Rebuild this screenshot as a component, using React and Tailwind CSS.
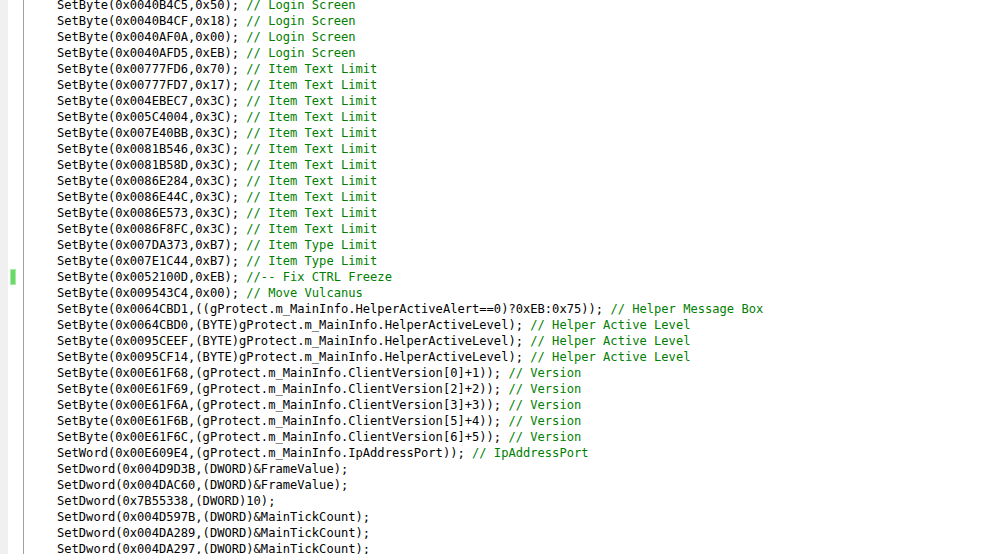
import React from 'react';

// code lines; comment part is drawn green
const lines = [
  ['SetByte(0x0040B4C5,0x50); ', '// Login Screen'],
  ['SetByte(0x0040B4CF,0x18); ', '// Login Screen'],
  ['SetByte(0x0040AF0A,0x00); ', '// Login Screen'],
  ['SetByte(0x0040AFD5,0xEB); ', '// Login Screen'],
  ['SetByte(0x00777FD6,0x70); ', '// Item Text Limit'],
  ['SetByte(0x00777FD7,0x17); ', '// Item Text Limit'],
  ['SetByte(0x004EBEC7,0x3C); ', '// Item Text Limit'],
  ['SetByte(0x005C4004,0x3C); ', '// Item Text Limit'],
  ['SetByte(0x007E40BB,0x3C); ', '// Item Text Limit'],
  ['SetByte(0x0081B546,0x3C); ', '// Item Text Limit'],
  ['SetByte(0x0081B58D,0x3C); ', '// Item Text Limit'],
  ['SetByte(0x0086E284,0x3C); ', '// Item Text Limit'],
  ['SetByte(0x0086E44C,0x3C); ', '// Item Text Limit'],
  ['SetByte(0x0086E573,0x3C); ', '// Item Text Limit'],
  ['SetByte(0x0086F8FC,0x3C); ', '// Item Text Limit'],
  ['SetByte(0x007DA373,0xB7); ', '// Item Type Limit'],
  ['SetByte(0x007E1C44,0xB7); ', '// Item Type Limit'],
  ['SetByte(0x0052100D,0xEB); ', '//-- Fix CTRL Freeze', true],
  ['SetByte(0x009543C4,0x00); ', '// Move Vulcanus'],
  ['SetByte(0x0064CBD1,((gProtect.m_MainInfo.HelperActiveAlert==0)?0xEB:0x75)); ', '// Helper Message Box'],
  ['SetByte(0x0064CBD0,(BYTE)gProtect.m_MainInfo.HelperActiveLevel); ', '// Helper Active Level'],
  ['SetByte(0x0095CEEF,(BYTE)gProtect.m_MainInfo.HelperActiveLevel); ', '// Helper Active Level'],
  ['SetByte(0x0095CF14,(BYTE)gProtect.m_MainInfo.HelperActiveLevel); ', '// Helper Active Level'],
  ['SetByte(0x00E61F68,(gProtect.m_MainInfo.ClientVersion[0]+1)); ', '// Version'],
  ['SetByte(0x00E61F69,(gProtect.m_MainInfo.ClientVersion[2]+2)); ', '// Version'],
  ['SetByte(0x00E61F6A,(gProtect.m_MainInfo.ClientVersion[3]+3)); ', '// Version'],
  ['SetByte(0x00E61F6B,(gProtect.m_MainInfo.ClientVersion[5]+4)); ', '// Version'],
  ['SetByte(0x00E61F6C,(gProtect.m_MainInfo.ClientVersion[6]+5)); ', '// Version'],
  ['SetWord(0x00E609E4,(gProtect.m_MainInfo.IpAddressPort)); ', '// IpAddressPort'],
  ['SetDword(0x004D9D3B,(DWORD)&FrameValue);', ''],
  ['SetDword(0x004DAC60,(DWORD)&FrameValue);', ''],
  ['SetDword(0x7B55338,(DWORD)10);', ''],
  ['SetDword(0x004D597B,(DWORD)&MainTickCount);', ''],
  ['SetDword(0x004DA289,(DWORD)&MainTickCount);', ''],
  ['SetDword(0x004DA297,(DWORD)&MainTickCount);', ''],
];

const Row = ({ code, comment, changed }) => (
  <div className="flex h-4">
    <div className="w-2 shrink-0 bg-[#f0f0f0]" />
    <div className="w-[15px] shrink-0 flex items-center pl-[2px]">
      {changed && <div className="w-[6px] h-4 bg-[#6ad96a] border border-[#a6eba6]" />}
    </div>
    <div className="w-px shrink-0 bg-[#a0a0a0]" />
    <div className="pl-[33px] whitespace-pre leading-4 text-black">
      {code}
      <span className="text-[#008000]">{comment}</span>
    </div>
  </div>
);

export default function App() {
  return (
    <div className="w-[984px] h-[554px] overflow-hidden bg-white font-['DejaVu_Sans_Mono',monospace] text-[12.1px]">
      <div className="-mt-[3px] flex flex-col">
        {lines.map(([code, comment, changed], i) => (
          <Row key={i} code={code} comment={comment} changed={changed} />
        ))}
        <Row code="" comment="" />
      </div>
    </div>
  );
}
